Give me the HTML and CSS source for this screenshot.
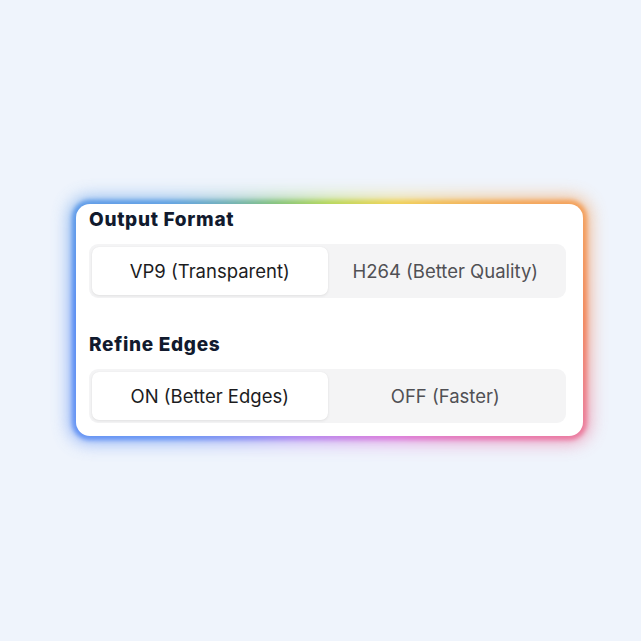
FILE: index.html
```html
<!DOCTYPE html>
<html lang="en">
<head>
<meta charset="utf-8">
<title>Settings</title>
<link rel="stylesheet" href="styles.css">
</head>
<body>
<main class="stage">
  <div class="glow-card">
    <section class="card">
      <div class="group">
        <h2 class="group-title">Output Format</h2>
        <div class="segmented">
          <button class="seg seg-active" type="button">VP9 (Transparent)</button>
          <button class="seg" type="button">H264 (Better Quality)</button>
        </div>
      </div>
      <div class="group">
        <h2 class="group-title">Refine Edges</h2>
        <div class="segmented">
          <button class="seg seg-active" type="button">ON (Better Edges)</button>
          <button class="seg" type="button">OFF (Faster)</button>
        </div>
      </div>
    </section>
  </div>
</main>
</body>
</html>
```

FILE: styles.css
```css
html, body {
  margin: 0;
  padding: 0;
  background: #eff4fc;
}

.stage {
  width: 641px;
  height: 641px;
  box-sizing: border-box;
  padding: 204px 0 0 76px;
}

.glow-card {
  position: relative;
  width: 507px;
}

.glow-card::before,
.glow-card::after {
  content: "";
  position: absolute;
  border-radius: 18px;
  background: conic-gradient(from 0deg at 50% 50%,
    #b8d85c 0deg,
    #f0d35a 30deg,
    #f4a75c 60deg,
    #f2885e 90deg,
    #ea7aa8 118deg,
    #dc7fdc 150deg,
    #b48cf0 195deg,
    #6c98f4 235deg,
    #5b8ef2 270deg,
    #62a2e4 305deg,
    #86c47c 335deg,
    #b8d85c 360deg);
  z-index: 0;
}

.glow-card::before {
  inset: -4px;
  filter: blur(2px);
}

.glow-card::after {
  inset: -6px;
  filter: blur(9px);
  opacity: 0.75;
}

.card {
  position: relative;
  z-index: 1;
  background: #ffffff;
  border-radius: 14px;
  padding: 4px 17px 13px 13px;
  display: flex;
  flex-direction: column;
  gap: 35px;
}

.group {
  display: flex;
  flex-direction: column;
  gap: 12px;
}

.group-title {
  margin: 0;
  font-family: Inter, "Liberation Sans", sans-serif;
  font-weight: 800;
  font-size: 19px;
  line-height: 24px;
  color: #111a2e;
  letter-spacing: 0.7px;
}

.segmented {
  display: grid;
  grid-template-columns: 1fr 1fr;
  padding: 3px;
  background: #f4f4f5;
  border-radius: 9px;
}

.seg {
  height: 48px;
  border: 0;
  margin: 0;
  background: transparent;
  border-radius: 7px;
  font-family: Inter, "Liberation Sans", sans-serif;
  font-size: 18.5px;
  font-weight: 400;
  color: #505054;
  cursor: pointer;
}

.seg-active {
  background: #ffffff;
  color: #1c1c1e;
  box-shadow: 0 1px 3px rgba(0, 0, 0, 0.08), 0 0 1px rgba(0, 0, 0, 0.06);
}
```
